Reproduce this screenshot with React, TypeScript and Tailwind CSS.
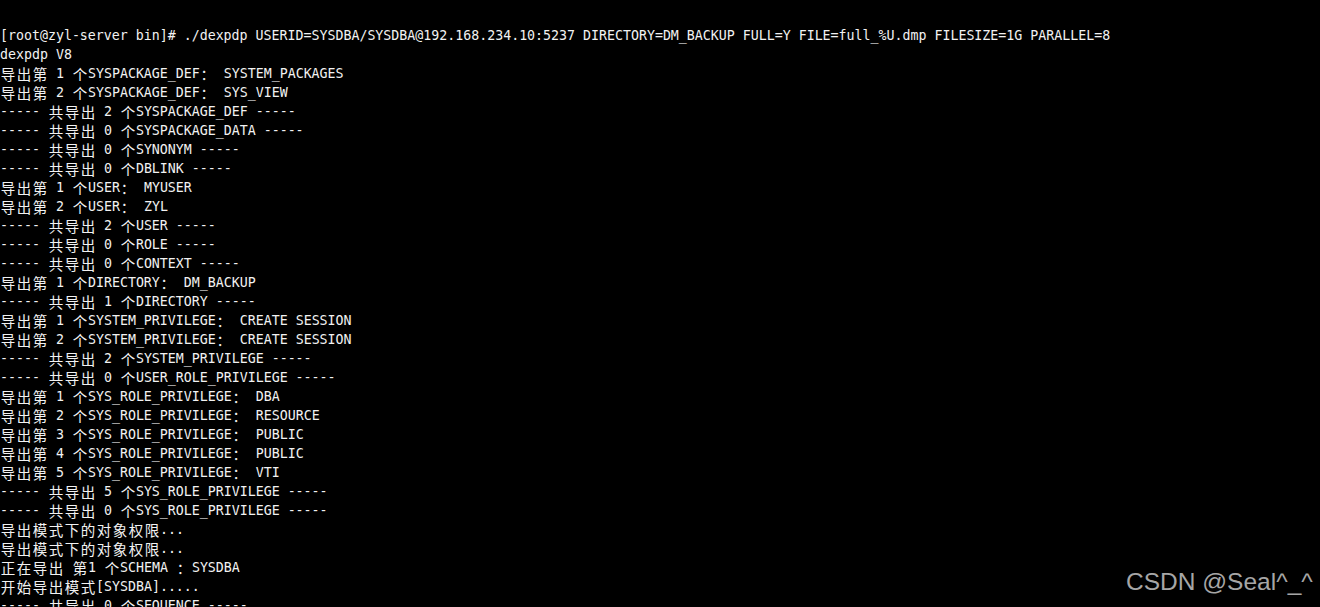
import React from 'react';

const lines: string[] = [
  '[root@zyl-server bin]# ./dexpdp USERID=SYSDBA/SYSDBA@192.168.234.10:5237 DIRECTORY=DM_BACKUP FULL=Y FILE=full_%U.dmp FILESIZE=1G PARALLEL=8',
  'dexpdp V8',
  '导出第 1 个SYSPACKAGE_DEF： SYSTEM_PACKAGES',
  '导出第 2 个SYSPACKAGE_DEF： SYS_VIEW',
  '----- 共导出 2 个SYSPACKAGE_DEF -----',
  '----- 共导出 0 个SYSPACKAGE_DATA -----',
  '----- 共导出 0 个SYNONYM -----',
  '----- 共导出 0 个DBLINK -----',
  '导出第 1 个USER： MYUSER',
  '导出第 2 个USER： ZYL',
  '----- 共导出 2 个USER -----',
  '----- 共导出 0 个ROLE -----',
  '----- 共导出 0 个CONTEXT -----',
  '导出第 1 个DIRECTORY： DM_BACKUP',
  '----- 共导出 1 个DIRECTORY -----',
  '导出第 1 个SYSTEM_PRIVILEGE： CREATE SESSION',
  '导出第 2 个SYSTEM_PRIVILEGE： CREATE SESSION',
  '----- 共导出 2 个SYSTEM_PRIVILEGE -----',
  '----- 共导出 0 个USER_ROLE_PRIVILEGE -----',
  '导出第 1 个SYS_ROLE_PRIVILEGE： DBA',
  '导出第 2 个SYS_ROLE_PRIVILEGE： RESOURCE',
  '导出第 3 个SYS_ROLE_PRIVILEGE： PUBLIC',
  '导出第 4 个SYS_ROLE_PRIVILEGE： PUBLIC',
  '导出第 5 个SYS_ROLE_PRIVILEGE： VTI',
  '----- 共导出 5 个SYS_ROLE_PRIVILEGE -----',
  '----- 共导出 0 个SYS_ROLE_PRIVILEGE -----',
  '导出模式下的对象权限...',
  '导出模式下的对象权限...',
  '正在导出 第1 个SCHEMA ：SYSDBA',
  '开始导出模式[SYSDBA].....',
  '----- 共导出 0 个SEQUENCE -----',
];

// wide chars take two terminal cells
const isWide = (ch: string) => /[\u3000-\u9fff\uff00-\uffef]/.test(ch);

const TermLine = ({ text }: { text: string }) => {
  const parts: React.ReactNode[] = [];
  let run = '';
  Array.from(text).forEach((ch, i) => {
    if (isWide(ch)) {
      if (run) parts.push(<span key={'r' + i}>{run}</span>);
      run = '';
      parts.push(
        <span
          key={'w' + i}
          className="inline-block h-[19px] w-[16px] text-center align-top text-[14.5px] leading-[19px] font-['Noto_Sans_CJK_SC',sans-serif]"
        >
          {ch}
        </span>
      );
    } else {
      run += ch;
    }
  });
  if (run) parts.push(<span key="end">{run}</span>);
  return <div className="h-[19px] whitespace-pre leading-[19px]">{parts}</div>;
};

export default function App() {
  return (
    <div className="relative h-[607px] w-[1320px] overflow-hidden bg-black">
      <div className="pt-[26px] font-['DejaVu_Sans_Mono','Liberation_Mono',monospace] text-[13.28px] text-[#f2f2f2]">
        {lines.map((l, i) => (
          <TermLine key={i} text={l} />
        ))}
      </div>

      {/* watermark */}
      <div className="absolute left-[1126px] top-[570px] font-['Liberation_Sans',Arial,sans-serif] text-[24.5px] leading-[24px] text-[#a6a6a6]">
        CSDN @Seal^_^
      </div>
    </div>
  );
}
